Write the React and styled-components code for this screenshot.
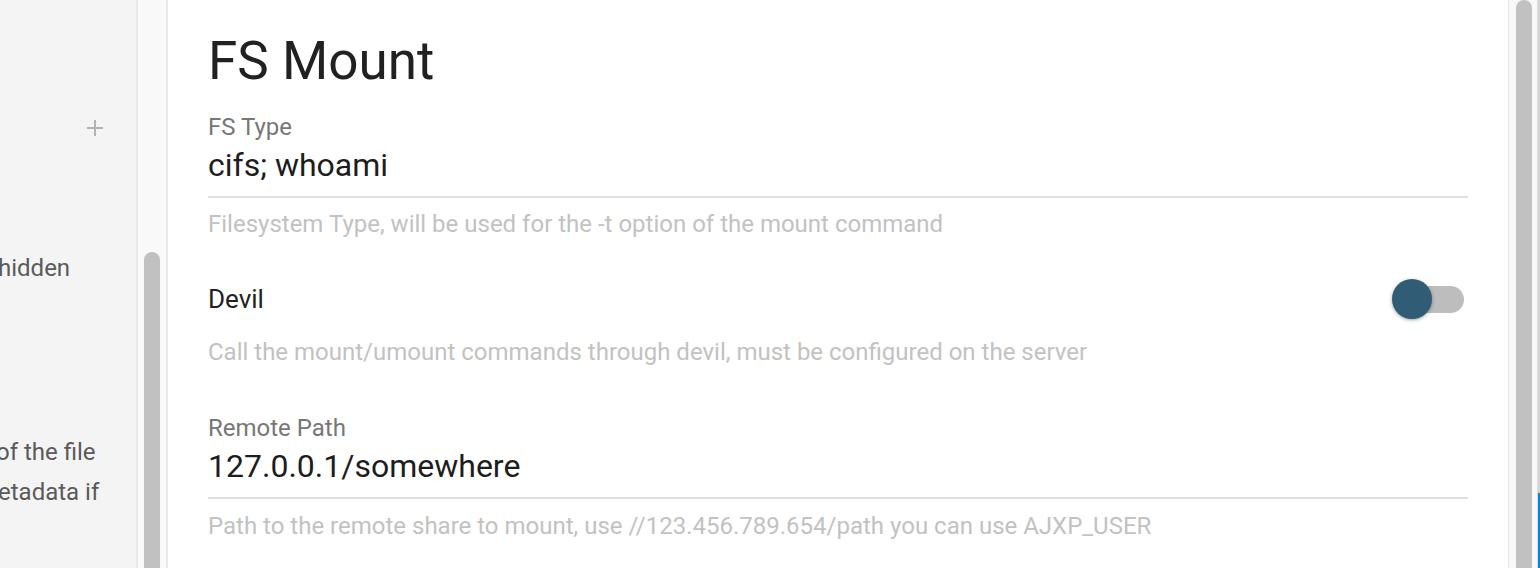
import React from "react";
import styled, { createGlobalStyle } from "styled-components";

const Global = createGlobalStyle`
  html, body { margin: 0; padding: 0; background: #ffffff; }
  body { font-family: Roboto, "Noto Sans", "Liberation Sans", sans-serif; }
  * { box-sizing: border-box; }
`;

const Screen = styled.div`
  width: 1540px;
  height: 568px;
  display: flex;
  overflow: hidden;
  background: #ffffff;
`;

const SidePanel = styled.div`
  width: 138px;
  flex: none;
  background: #f4f4f4;
  border-right: 2px solid #e9e9e9;
  overflow: hidden;
  display: flex;
  flex-direction: column;
  color: #5a5a5a;
  font-size: 24px;
`;

const AddRow = styled.div`
  height: 32px;
  margin-top: 112px;
  display: flex;
  justify-content: flex-end;
  align-items: center;
  padding-right: 33px;
`;

const SideLine = styled.div`
  height: 40px;
  line-height: 40px;
  white-space: nowrap;
  text-indent: ${(p) => p.$indent || 0}px;
  margin-top: ${(p) => p.$gap || 0}px;
`;

const Gutter = styled.div`
  width: 30px;
  flex: none;
  background: #f9f9f9;
  border-right: 2px solid #e9e9e9;
  display: flex;
  padding-left: 6px;
  padding-top: ${(p) => p.$thumbTop}px;
`;

const Thumb = styled.div`
  width: 16px;
  flex: none;
  background: #c1c1c1;
  border-radius: 8px 8px 0 0;
  height: 100%;
`;

const Card = styled.div`
  flex: 1;
  background: #ffffff;
  padding: 30px 40px 0 40px;
  display: flex;
  flex-direction: column;
`;

const Title = styled.h1`
  margin: 0;
  font-weight: 400;
  font-size: 53px;
  line-height: 62px;
  color: #212121;
`;

const Field = styled.div`
  display: flex;
  flex-direction: column;
  margin-top: ${(p) => p.$gap}px;
`;

const Label = styled.div`
  font-size: 24px;
  line-height: 30px;
  color: #777777;
`;

const Value = styled.div`
  font-size: 32px;
  line-height: 40px;
  margin-top: 3px;
  color: #1d1d1d;
`;

const Underline = styled.div`
  height: 2px;
  margin-top: 11px;
  background: #e0e0e0;
`;

const Helper = styled.div`
  font-size: 24px;
  line-height: 32px;
  color: #c2c2c2;
  margin-top: ${(p) => p.$gap}px;
  white-space: nowrap;
`;

const ToggleRow = styled.div`
  height: 40px;
  margin-top: 39px;
  display: flex;
  align-items: center;
  justify-content: space-between;
  padding-right: 4px;
`;

const ToggleLabel = styled.div`
  font-size: 26px;
  color: #222222;
`;

const Switch = styled.div`
  position: relative;
  width: 72px;
  height: 40px;
  flex: none;
`;

const Track = styled.div`
  position: absolute;
  right: 0;
  top: 7px;
  width: 54px;
  height: 27px;
  border-radius: 14px;
  background: #bdbdbd;
`;

const Knob = styled.div`
  position: absolute;
  left: 0;
  top: 0;
  width: 40px;
  height: 40px;
  border-radius: 50%;
  background: #305d75;
  box-shadow: 0 1px 4px rgba(0, 0, 0, 0.25), 0 1px 2px rgba(0, 0, 0, 0.15);
`;

const RightGutter = styled.div`
  width: 30px;
  flex: none;
  background: #f8f8f8;
  border-left: 1px solid #e6e6e6;
  border-right: 1px solid #dcdcdc;
  display: flex;
  padding-left: 7px;
`;

const FullThumb = styled.div`
  width: 16px;
  height: 100%;
  background: #c1c1c1;
  border-radius: 8px 8px 0 0;
`;

const Peek = styled.div`
  width: 2px;
  flex: none;
  display: flex;
  flex-direction: column;
  background: #d4d4d4;
`;

const PeekSpacer = styled.div`
  flex: 1;
`;

const PeekAccent = styled.div`
  height: 75px;
  background: #0288d1;
`;

const PlusIcon = () => (
  <svg width="16" height="16" viewBox="0 0 16 16">
    <path d="M8 0v16M0 8h16" stroke="#b3b3b3" strokeWidth="2" fill="none" />
  </svg>
);

export default function App() {
  return (
    <>
      <Global />
      <Screen>
        <SidePanel>
          <AddRow>
            <PlusIcon />
          </AddRow>
          <SideLine $gap={104} $indent={-2}>hidden</SideLine>
          <SideLine $gap={144} $indent={-4}>of the file</SideLine>
          <SideLine $indent={-2}>etadata if</SideLine>
        </SidePanel>
        <Gutter $thumbTop={252}>
          <Thumb />
        </Gutter>
        <Card>
          <Title>FS Mount</Title>
          <Field $gap={20}>
            <Label>FS Type</Label>
            <Value>cifs; whoami</Value>
            <Underline />
          </Field>
          <Helper $gap={10}>
            Filesystem Type, will be used for the -t option of the mount command
          </Helper>
          <ToggleRow>
            <ToggleLabel>Devil</ToggleLabel>
            <Switch>
              <Track />
              <Knob />
            </Switch>
          </ToggleRow>
          <Helper $gap={17}>
            Call the mount/umount commands through devil, must be configured on the server
          </Helper>
          <Field $gap={45}>
            <Label>Remote Path</Label>
            <Value>127.0.0.1/somewhere</Value>
            <Underline />
          </Field>
          <Helper $gap={11}>
            Path to the remote share to mount, use //123.456.789.654/path you can use AJXP_USER
          </Helper>
        </Card>
        <RightGutter>
          <FullThumb />
        </RightGutter>
        <Peek>
          <PeekSpacer />
          <PeekAccent />
        </Peek>
      </Screen>
    </>
  );
}
